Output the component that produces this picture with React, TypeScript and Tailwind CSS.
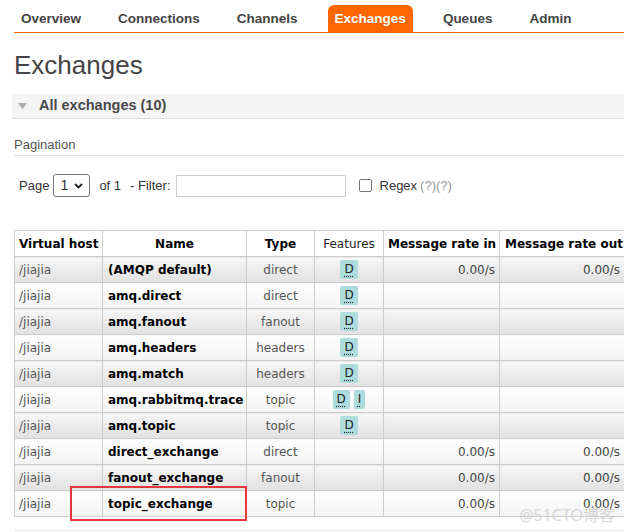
import { Fragment } from 'react';

const navItems = ['Overview', 'Connections', 'Channels', 'Exchanges', 'Queues', 'Admin'];

type Row = {
  name: string;
  type: string;
  features: string[];
  rateIn?: string;
  rateOut?: string;
};

const rows: Row[] = [
  { name: '(AMQP default)', type: 'direct', features: ['D'], rateIn: '0.00/s', rateOut: '0.00/s' },
  { name: 'amq.direct', type: 'direct', features: ['D'] },
  { name: 'amq.fanout', type: 'fanout', features: ['D'] },
  { name: 'amq.headers', type: 'headers', features: ['D'] },
  { name: 'amq.match', type: 'headers', features: ['D'] },
  { name: 'amq.rabbitmq.trace', type: 'topic', features: ['D', 'I'] },
  { name: 'amq.topic', type: 'topic', features: ['D'] },
  { name: 'direct_exchange', type: 'direct', features: [], rateIn: '0.00/s', rateOut: '0.00/s' },
  { name: 'fanout_exchange', type: 'fanout', features: [], rateIn: '0.00/s', rateOut: '0.00/s' },
  { name: 'topic_exchange', type: 'topic', features: [], rateIn: '0.00/s', rateOut: '0.00/s' },
];

const sans = "font-['Liberation_Sans',Arial,sans-serif]";
const verdana = "font-['DejaVu_Sans',Verdana,sans-serif]";

function Badge({ label }: { label: string }) {
  return (
    <span className="inline-block h-[19px] rounded-[2px] bg-[#addcdf] px-[4px] text-[12px] leading-[19px] text-[#222] underline decoration-dotted underline-offset-[3px]">
      {label}
    </span>
  );
}

export default function App() {
  return (
    <div className={`relative h-[532px] w-[624px] overflow-hidden bg-white ${sans}`}>
      {/* top menu */}
      <nav className="ml-[14px] border-b border-[#f60] pt-[5px]">
        <ul className="flex gap-[23px]">
          {navItems.map((item) => (
            <li key={item}>
              <a
                className={
                  item === 'Exchanges'
                    ? 'block h-[27px] rounded-t-[6px] bg-[#f60] px-[7px] text-[13.5px] font-bold leading-[27px] text-white'
                    : 'block h-[27px] px-[7px] text-[13.5px] font-bold leading-[27px] text-[#444]'
                }
              >
                {item}
              </a>
            </li>
          ))}
        </ul>
      </nav>

      <div className="pl-[14px]">
        <h1 className="mt-[17px] text-[26px] leading-[30px] text-[#444]">Exchanges</h1>

        <div className="-ml-[2px] mt-[14px] flex h-[25px] items-center border-b border-[#ddd] bg-[#f4f4f4] pl-[6px]">
          <svg width="9" height="6" viewBox="0 0 9 6" className="mr-[12px]">
            <path d="M0 0 L9 0 L4.5 6 Z" fill="#aaa" />
          </svg>
          <span className="text-[14.5px] font-bold text-[#484848]">All exchanges (10)</span>
        </div>

        <div className="mt-[17px] border-b border-[#ddd] pb-[1px] text-[13px] leading-[18px] text-[#555]">
          Pagination
        </div>

        <div className="mt-[18px] flex items-center pl-[5px] text-[13px] text-[#333]">
          <span>Page</span>
          <div className="ml-[4px] flex h-[23px] w-[37px] items-center justify-between rounded-[3px] border border-[#767676] px-[6px]">
            <span className="text-[14px]">1</span>
            <svg width="9" height="6" viewBox="0 0 9 6">
              <path d="M1 1 L4.5 4.5 L8 1" fill="none" stroke="#222" strokeWidth="1.8" />
            </svg>
          </div>
          <span className="ml-[9px]">of 1</span>
          <span className="ml-[9px]">- Filter:</span>
          <div className="ml-[5px] h-[22px] w-[170px] border border-[#ccc] bg-white" />
          <div className="ml-[13px] h-[13px] w-[13px] rounded-[2px] border border-[#767676] bg-white" />
          <span className="ml-[8px]">Regex</span>
          <span className="ml-[3px] text-[#999]">(?)(?)</span>
        </div>

        <table className={`mt-[33px] w-[612px] table-fixed border-collapse text-[12px] ${verdana}`}>
          <colgroup>
            <col className="w-[88px]" />
            <col className="w-[144px]" />
            <col className="w-[68px]" />
            <col className="w-[69px]" />
            <col className="w-[116px]" />
            <col className="w-[127px]" />
          </colgroup>
          <thead>
            <tr className="h-[26px] bg-white text-[#000]">
              <th className="whitespace-nowrap border border-[#ccc] px-[4px] text-left font-bold">Virtual host</th>
              <th className="border border-[#ccc] px-[5px] text-center font-bold">Name</th>
              <th className="border border-[#ccc] px-[5px] text-center font-bold">Type</th>
              <th className="border border-[#ccc] px-[5px] text-center font-normal text-[#222]">Features</th>
              <th className="whitespace-nowrap border border-[#ccc] px-[4px] text-center font-bold">Message rate in</th>
              <th className="whitespace-nowrap border border-[#ccc] pl-[5px] text-left font-bold">Message rate out</th>
            </tr>
          </thead>
          <tbody>
            {rows.map((row, i) => {
              const bg =
                i % 2 === 0
                  ? 'bg-[linear-gradient(#f6f6f6,#e1e1e1)]'
                  : 'bg-[linear-gradient(#ffffff,#f3f3f3)]';
              const cell = `border border-[#ccc] ${bg}`;
              return (
                <tr key={row.name} className="h-[26px]">
                  <td className={`${cell} px-[4px] text-[#555]`}>/jiajia</td>
                  <td className={`${cell} whitespace-nowrap px-[5px] font-bold text-[#000]`}>{row.name}</td>
                  <td className={`${cell} text-center text-[#555]`}>{row.type}</td>
                  <td className={`${cell} text-center`}>
                    <span className="inline-flex gap-[4px] align-middle">
                      {row.features.map((f) => (
                        <Fragment key={f}>
                          <Badge label={f} />
                        </Fragment>
                      ))}
                    </span>
                  </td>
                  <td className={`${cell} pr-[4px] text-right text-[#444]`}>{row.rateIn ?? ''}</td>
                  <td className={`${cell} pr-[6px] text-right text-[#444]`}>{row.rateOut ?? ''}</td>
                </tr>
              );
            })}
          </tbody>
        </table>

        <div className="mt-[12px] h-[25px] bg-[#f4f4f4]" />
      </div>

      {/* annotation box */}
      <div className="absolute left-[70px] top-[486px] h-[35px] w-[177px] border-2 border-[#e8383d]" />

      {/* watermark */}
      <div className="absolute bottom-[8px] right-[9px] font-['Noto_Sans','Noto_Sans_CJK_SC',sans-serif] text-[16px] leading-[18px] text-[#cfcfcf] opacity-80">
        @51CTO博客
      </div>
    </div>
  );
}
